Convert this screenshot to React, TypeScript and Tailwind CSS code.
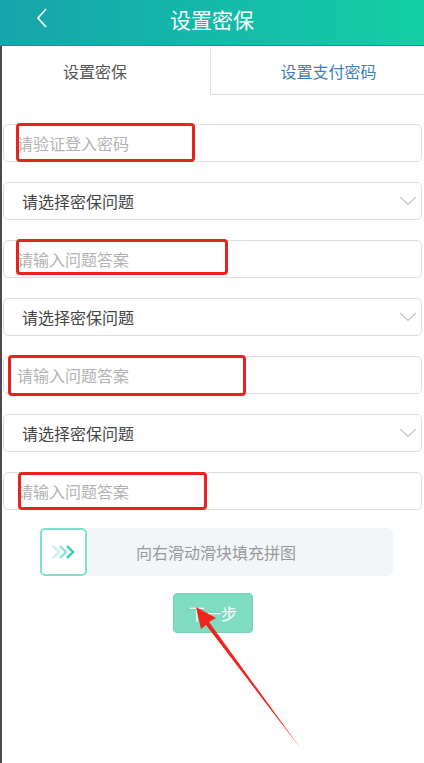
import React from "react";

const font = { fontFamily: '"Noto Sans CJK SC", "Noto Sans", sans-serif' };

function Chevron() {
  return (
    <svg width="18" height="10" viewBox="0 0 18 10" className="shrink-0">
      <path d="M1 1 L9 8.5 L17 1" fill="none" stroke="#c4c4c4" strokeWidth="1.2" />
    </svg>
  );
}

function InputRow({ text, box }: { text: string; box: string }) {
  return (
    <div className="relative h-[38px] rounded-[5px] border border-[#dedede] bg-white flex items-center pl-[13px]">
      <span className="text-[16px] text-[#b3b3b3]">{text}</span>
      <div className={`absolute border-[3px] border-[#e8231f] rounded-[4px] ${box}`} />
    </div>
  );
}

function SelectRow() {
  return (
    <div className="h-[38px] rounded-[5px] border border-[#dedede] bg-white flex items-center pl-[18px] pr-[4px] justify-between">
      <span className="text-[16px] text-[#444]">请选择密保问题</span>
      <Chevron />
    </div>
  );
}

export default function App() {
  return (
    <div className="relative w-[424px] h-[763px] bg-white overflow-hidden" style={font}>
      <div className="h-[46px] bg-gradient-to-r from-[#17a4ac] to-[#13cfa4] flex items-center relative border-b border-[#139a96]">
        <svg width="14" height="22" viewBox="0 0 14 22" className="absolute left-[35px] top-[7px]">
          <path d="M11 2 L3 11 L11 20" fill="none" stroke="#e9fbf7" strokeWidth="1.8" />
        </svg>
        <div className="w-full text-center text-white text-[21px] leading-none -mt-[6px]">设置密保</div>
      </div>
      <div className="border-l-2 border-[#4a4a4a] h-[717px] relative">
        <div className="flex h-[49px]">
          <div className="w-[208px] flex items-center justify-center pr-[22px] text-[16px] text-[#555]">设置密保</div>
          <div className="flex-1 mt-[2px] border-l border-b border-[#e0e0e0] rounded-tl-[3px] flex items-center justify-center pl-[22px] text-[16px] text-[#3d7fbf]">
            设置支付密码
          </div>
        </div>
        <div className="pt-[29px] pl-[1px] flex flex-col gap-[20px] w-[420px]">
          <InputRow text="请验证登入密码" box="left-[12px] top-[-2px] w-[179px] h-[39px]" />
          <SelectRow />
          <InputRow text="请输入问题答案" box="left-[12px] top-[-2px] w-[212px] h-[36px]" />
          <SelectRow />
          <InputRow text="请输入问题答案" box="left-[4px] top-[-2px] w-[238px] h-[41px]" />
          <SelectRow />
          <InputRow text="请输入问题答案" box="left-[14px] top-[-1px] w-[189px] h-[38px]" />
        </div>
        <div className="mt-[18px] ml-[38px] w-[353px] h-[48px] flex">
          <div className="w-[47px] h-[48px] rounded-[5px] border-2 border-[#7fe0d2] bg-white flex items-center justify-center">
            <svg width="26" height="16" viewBox="0 0 26 16">
              <path d="M2 2 L8 8 L2 14" fill="none" stroke="#c8f1ea" strokeWidth="2.4" />
              <path d="M9 2 L15 8 L9 14" fill="none" stroke="#8ee3d3" strokeWidth="2.4" />
              <path d="M16 2 L22 8 L16 14" fill="none" stroke="#2fcdb5" strokeWidth="2.4" />
            </svg>
          </div>
          <div className="flex-1 bg-[#f3f6f9] rounded-r-[6px] flex items-center justify-center pr-[48px] text-[16px] text-[#999]">
            向右滑动滑块填充拼图
          </div>
        </div>
        <div className="mt-[17px] flex justify-center">
          <div className="w-[80px] h-[40px] rounded-[4px] bg-[#7fdcc0] border border-[#74d6b8] flex items-center justify-center text-[16px] text-white">
            下一步
          </div>
        </div>
      </div>
      <svg width="424" height="763" className="absolute left-0 top-0 pointer-events-none">
        <polygon points="196,607 216,618 209,622 301,749 206,625 201,629" fill="#f0241c" />
      </svg>
    </div>
  );
}
